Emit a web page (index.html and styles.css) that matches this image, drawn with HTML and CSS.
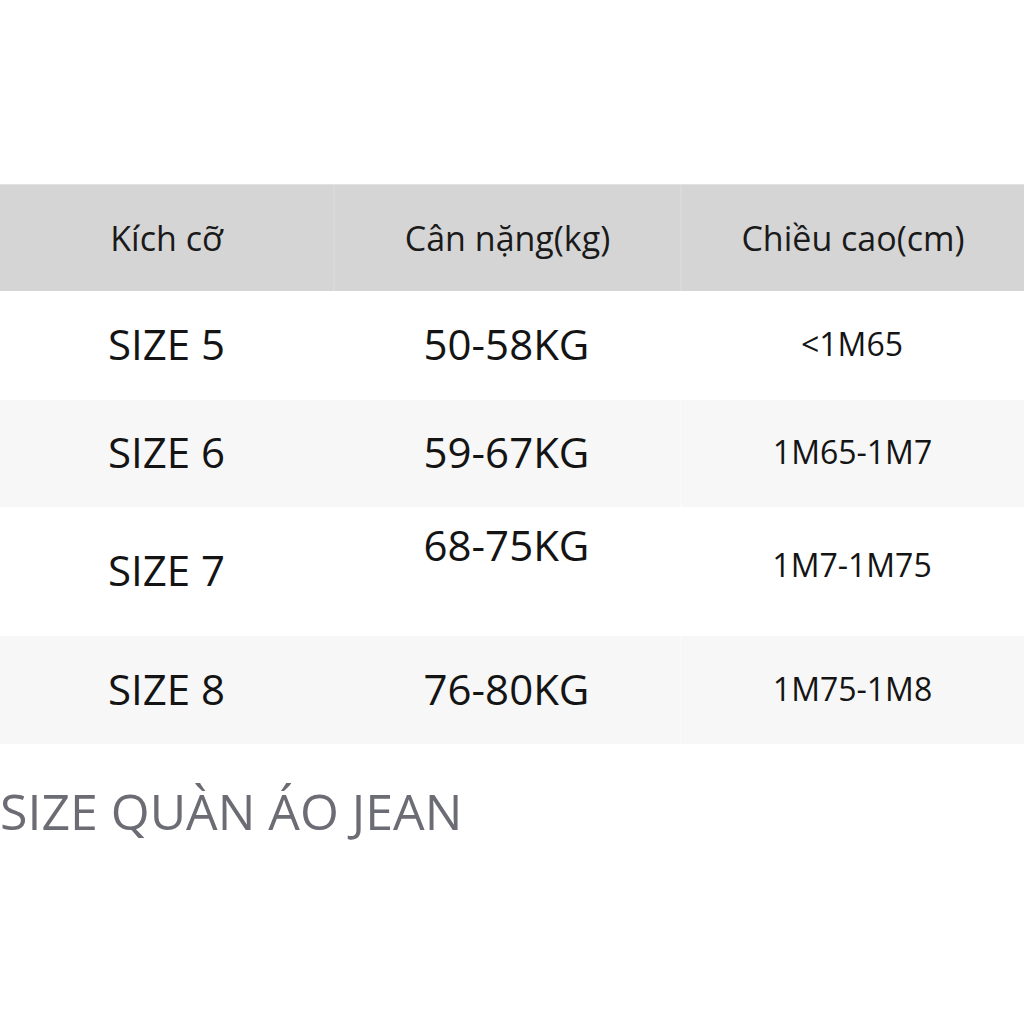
FILE: index.html
```html
<!DOCTYPE html>
<html lang="vi">
<head>
<meta charset="utf-8">
<title>Size</title>
<link rel="stylesheet" href="styles.css">
</head>
<body>
<div class="page">
  <div class="table">
    <div class="row head">
      <div class="cell c1">Kích cỡ</div>
      <div class="cell c2">Cân nặng(kg)</div>
      <div class="cell c3">Chiều cao(cm)</div>
    </div>
    <div class="row r1">
      <div class="cell c1 big">SIZE 5</div>
      <div class="cell c2 big">50-58KG</div>
      <div class="cell c3 small">&lt;1M65</div>
    </div>
    <div class="row r2 stripe">
      <div class="cell c1 big">SIZE 6</div>
      <div class="cell c2 big">59-67KG</div>
      <div class="cell c3 small">1M65-1M7</div>
    </div>
    <div class="row r3">
      <div class="cell c1 big">SIZE 7</div>
      <div class="cell c2 big up">68-75KG</div>
      <div class="cell c3 small up-s">1M7-1M75</div>
    </div>
    <div class="row r4 stripe">
      <div class="cell c1 big">SIZE 8</div>
      <div class="cell c2 big">76-80KG</div>
      <div class="cell c3 small">1M75-1M8</div>
    </div>
  </div>
  <div class="title">SIZE QUÀN ÁO JEAN</div>
</div>
</body>
</html>
```
FILE: styles.css
```css
html, body {
  margin: 0;
  padding: 0;
  background: #ffffff;
}
body {
  font-family: "Open Sans", "Noto Sans", sans-serif;
  color: #141414;
}
.page {
  width: 1024px;
  height: 1024px;
  padding-top: 184px;
  box-sizing: border-box;
}
.table {
  display: flex;
  flex-direction: column;
}
.row {
  display: grid;
  grid-template-columns: 333px 347px 1fr;
}
.cell {
  display: flex;
  align-items: center;
  justify-content: center;
  white-space: nowrap;
}
.head {
  height: 107px;
  background: #d5d5d5;
  border-top: 1px solid #e2e2e2;
  box-sizing: border-box;
  font-size: 34px;
  color: #1a1a1a;
}
.head .c2, .head .c3 {
  border-left: 2px solid #dadada;
}
.r1 { height: 109px; }
.r2 { height: 107px; }
.r3 { height: 129px; }
.r4 { height: 108px; }
.stripe {
  background: #f7f7f7;
}
.stripe .c3 {
  border-left: 1px solid #fbfbfb;
}
.big {
  font-size: 42px;
  padding-bottom: 4px;
}
.small {
  font-size: 32px;
  padding-bottom: 4px;
}
.up {
  padding-bottom: 54px;
}
.up-s {
  padding-bottom: 14px;
}
.title {
  margin-top: 37px;
  font-size: 50px;
  line-height: 60px;
  color: #6c6c74;
  white-space: nowrap;
}
```
